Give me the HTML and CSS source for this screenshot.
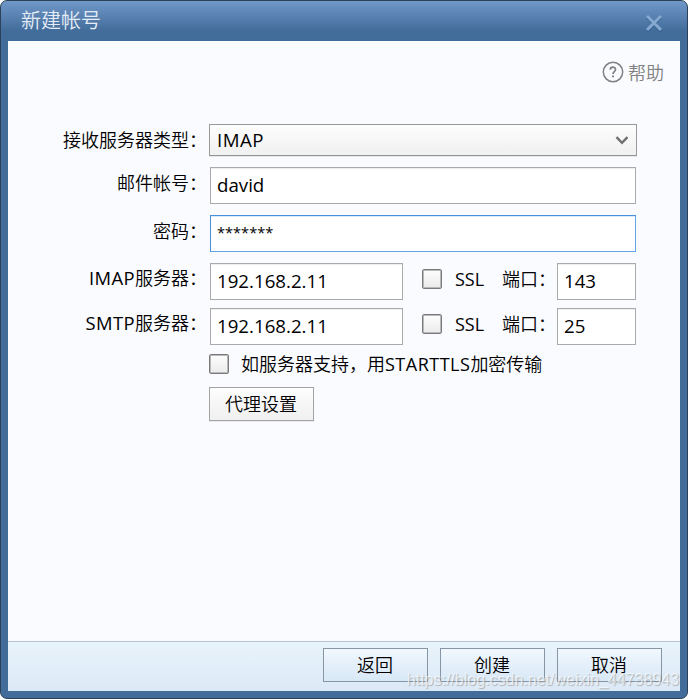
FILE: index.html
```html
<!DOCTYPE html>
<html lang="zh-CN">
<head>
<meta charset="utf-8">
<title>新建帐号</title>
<link rel="stylesheet" href="styles.css">
</head>
<body>
<div class="window">
  <header class="titlebar">
    <h1>新建帐号</h1>
    <svg class="close" width="18" height="18" viewBox="0 0 18 18"><path d="M2 2L16 16M16 2L2 16" fill="none" stroke="#86a9d2" stroke-width="3"/></svg>
  </header>
  <main class="content">
    <div class="help">
      <svg width="22" height="22" viewBox="0 0 22 22" fill="none" stroke="#808080"><circle cx="11" cy="11" r="9.7" stroke-width="1.5"/><path d="M8.3 8.7C8.3 5.4 13.5 5.4 13.5 8.5C13.5 10.5 11 10.6 11 13" stroke-width="1.7"/><path d="M11 14.4V16.3" stroke-width="2"/></svg>
      <span>帮助</span>
    </div>
    <form class="form">
      <div class="row row-type">
        <span class="label">接收服务器类型：</span>
        <div class="select"><span class="latin imap">IMAP</span><svg width="14" height="9" viewBox="0 0 14 9"><path d="M1.5 1.2L7 6.8L12.5 1.2" fill="none" stroke="#707070" stroke-width="2.4"/></svg></div>
      </div>
      <div class="row row-account">
        <span class="label">邮件帐号：</span>
        <div class="field wide">david</div>
      </div>
      <div class="row row-password">
        <span class="label">密码：</span>
        <div class="field wide focus"><span class="stars">*******</span></div>
      </div>
      <div class="row row-imap">
        <span class="label"><span class="latin protocol">IMAP</span>服务器：</span>
        <div class="field host">192.168.2.11</div>
        <span class="check"></span><span class="ssl">SSL</span><span class="port-label">端口：</span>
        <div class="field port">143</div>
      </div>
      <div class="row row-smtp">
        <span class="label"><span class="latin protocol">SMTP</span>服务器：</span>
        <div class="field host">192.168.2.11</div>
        <span class="check"></span><span class="ssl">SSL</span><span class="port-label">端口：</span>
        <div class="field port">25</div>
      </div>
      <div class="row row-tls">
        <span class="check"></span><span class="tls">如服务器支持，用<span class="latin starttls">STARTTLS</span>加密传输</span>
      </div>
      <button type="button" class="button proxy">代理设置</button>
    </form>
  </main>
  <footer class="footer">
    <button type="button" class="button">返回</button>
    <button type="button" class="button">创建</button>
    <button type="button" class="button">取消</button>
  </footer>
  <div class="watermark">https://blog.csdn.net/weixin_44738943</div>
</div>
</body>
</html>
```
FILE: styles.css
```css
* { box-sizing: border-box; }
body {
  margin: 0;
  background: #fff;
  color: #000;
  font: 18px/24px "Open Sans", "Noto Sans CJK SC", sans-serif;
}
.window {
  position: relative;
  width: 688px;
  height: 699px;
  padding: 0 7px 7px;
  border: 1px solid #2b4159;
  border-radius: 7px;
  background: linear-gradient(#7099c9 0, #426c9a 30px, #426c9a 100%);
  overflow: hidden;
}
.titlebar {
  display: flex;
  justify-content: space-between;
  height: 40px;
  padding: 7px 17px 0 13px;
}
h1 {
  margin: 0;
  color: #e4edf7;
  font: 350 20px/24px "Noto Sans CJK SC", sans-serif;
}
.close { margin-top: 6px; filter: drop-shadow(0 1px 0 #315b87); }
.content {
  height: 600px;
  background: #f9fbff;
}
.help {
  display: flex;
  justify-content: flex-end;
  gap: 5px;
  height: 83px;
  padding: 19px 16px 0 0;
  color: #808080;
}
.help svg { position: relative; left: .5px; top: .5px; }
.label, .tls, .help span, .port-label, .button { font-family: "Noto Sans CJK SC", sans-serif; font-weight: 350; }
.row { display: flex; white-space: nowrap; }
.label {
  width: 199px;
  margin-right: 3px;
  text-align: right;
}
.latin, .field, .ssl { font-family: "Open Sans", sans-serif; font-weight: 400; }
.protocol { font-size: 18.4px; letter-spacing: .4px; }
.starttls { letter-spacing: .5px; }
.select {
  display: flex;
  align-items: center;
  justify-content: space-between;
  width: 428px;
  height: 32px;
  margin-left: -1px;
  padding: 0 7px;
  border: 1px solid #999;
  border-bottom-color: #949494;
  background: linear-gradient(#fdfdfd, #f0f0f0);
  box-shadow: 0 1px #e6e7ea;
}
.field {
  height: 37px;
  padding: 5px 6px;
  border: 1px solid #aaa;
  background: #fff;
  font-size: 18.7px;
  box-shadow: inset 0 1px #eee;
}
.imap { font-size: 18.7px; letter-spacing: .5px; }
.wide { width: 426px; }
.focus { padding-top: 3px; border-color: #4990dc #62a5e7 #62a5e7 #4990dc; box-shadow: inset 0 1px #dcebf8; }
.stars { font-size: 14.6px; }
.host { width: 193px; }
.port { width: 79px; }
.row-type .label { padding-top: 3px; }
.row-account { height: 37px; margin-top: 11px; }
.row-account .label { padding-top: 3px; }
.row-password { height: 37px; margin-top: 11px; }
.row-password .label { padding-top: 3px; }
.row-imap { height: 37px; margin-top: 11px; }
.row-smtp { height: 37px; margin-top: 8px; }
.row-imap .label, .row-smtp .label { padding-top: 2px; }
.check {
  flex: none;
  width: 20px;
  height: 20px;
  border: 1px solid #7b7b7b;
  border-radius: 2px;
  background: linear-gradient(#fdfdfd, #ebebeb);
  box-shadow: inset 0 0 0 1px #b8b8b8;
}
.host + .check { margin: 6px 13px 0 19px; }
.ssl { width: 47px; padding-top: 4px; }
.port-label { width: 55px; padding-top: 3px; }
.row-tls { height: 20px; margin: 9px 0 0 201px; }
.tls { margin: -3px 0 0 12px; }
.button {
  width: 105px;
  height: 34px;
  padding: 0 1px 2px 0;
  border: 1px solid #8796a5;
  background: linear-gradient(#f1f7fe, #d8e8f6);
  color: #000;
  font-size: 18px;
  line-height: 24px;
}
.proxy {
  display: block;
  margin: 13px 0 0 201px;
  border-color: #a3a3a3;
  background: linear-gradient(#fdfdfd, #f0f0f0);
  box-shadow: 0 1px #e8e9ec;
}
.footer {
  display: flex;
  justify-content: flex-end;
  gap: 12px;
  height: 50px;
  padding: 6px 18px 0 0;
  border-top: 1px solid #b4c3ce;
  background: linear-gradient(#e8f3fb, #dce9f6);
}
.watermark {
  position: absolute;
  right: 8px;
  bottom: 8px;
  color: rgba(255, 255, 255, .65);
  font: 16px/20px "Liberation Sans", sans-serif;
  text-shadow: 1px 1px 1px rgba(110, 110, 110, .45);
}
```
